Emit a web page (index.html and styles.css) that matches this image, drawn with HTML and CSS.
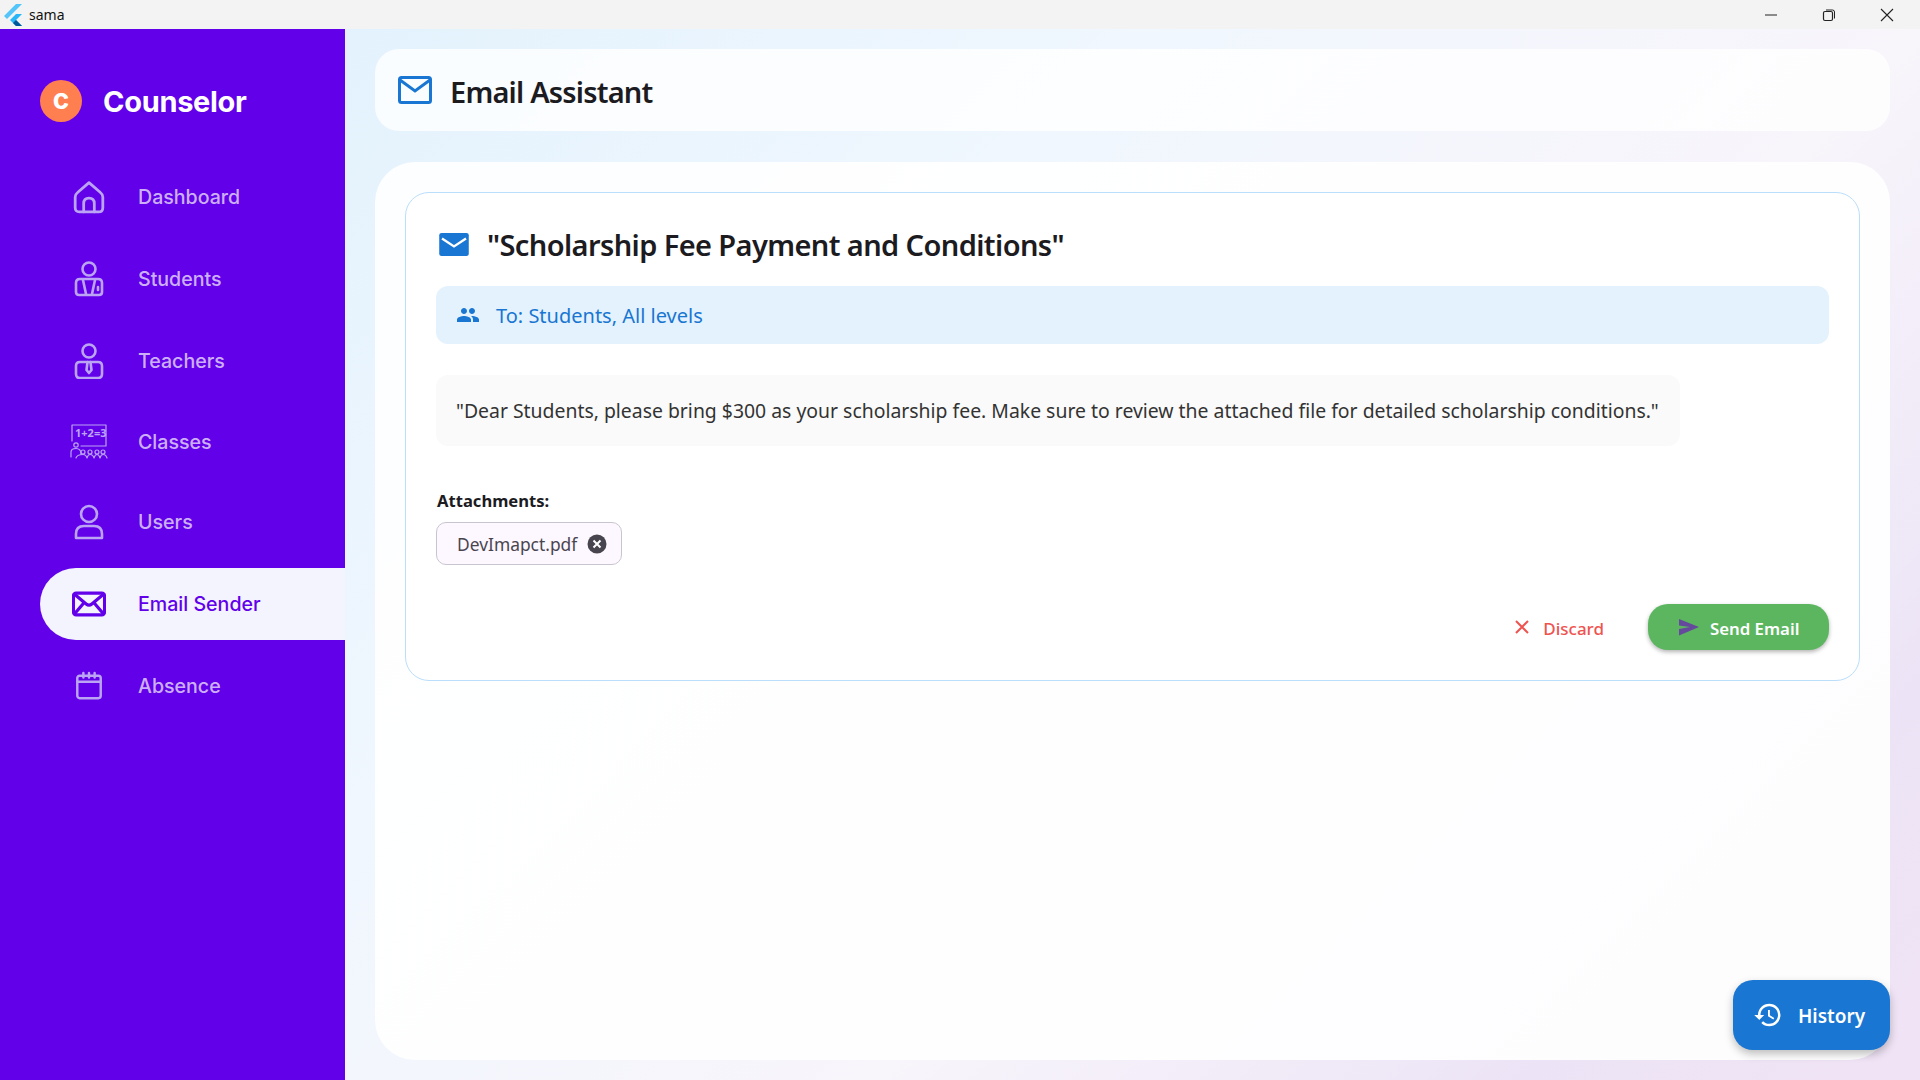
FILE: index.html
```html
<!DOCTYPE html>
<html lang="en">
<head>
    <meta charset="UTF-8">
    <title>sama</title>
    <link rel="stylesheet" href="styles.css">
</head>
<body>
    <div class="titlebar">
        <svg class="app-logo" width="20" height="24" viewBox="0 0 20 24">
            <path d="M13 1h6L7 13l-3 3-3-3z" fill="#54c5f8"/>
            <path d="M13 11h6l-6 6 6 6h-6l-6-6z" fill="#29b6f6"/>
            <path d="M10 20l3-3 6 6h-6z" fill="#01579b"/>
        </svg>
        <span class="app-name">sama</span>
        <div class="win-controls">
            <svg width="14" height="14" viewBox="0 0 14 14"><path d="M1 7h12" stroke="#222" stroke-width="1" fill="none"/></svg>
            <svg width="14" height="14" viewBox="0 0 14 14"><rect x="1.5" y="3.5" width="9" height="9" rx="1.5" stroke="#222" stroke-width="1.2" fill="none"/><path d="M4 2h6.5a2 2 0 0 1 2 2v6.5" stroke="#222" fill="none"/></svg>
            <svg width="14" height="14" viewBox="0 0 14 14"><path d="M1 1l12 12M13 1L1 13" stroke="#222" stroke-width="1.1" fill="none"/></svg>
        </div>
    </div>

    <div class="app">
        <aside class="sidebar">
            <div class="brand">
                <div class="brand-badge">c</div>
                <span class="brand-name">Counselor</span>
            </div>
            <nav class="nav">
                <a class="nav-item">
                    <svg class="nav-icon nav-icon-small" viewBox="0 0 32 32"><path d="M16 2.5 L26.5 11.5 Q29 13.5 29 16 V26 Q29 30 25 30 H7 Q3 30 3 26 V16 Q3 13.5 5.500 11.500 Z"/><path d="M11 30 V22 Q11 17 16 17 Q21 17 21 22 V30"/></svg>
                    <span>Dashboard</span>
                </a>
                <a class="nav-item">
                    <svg class="nav-icon" viewBox="0 0 32 36"><circle cx="16" cy="8" r="6.500"/><path d="M7 18 H25 Q29 18 29 22 V31 Q29 34 26 34 H6 Q3 34 3 31 V22 Q3 18 7 18 Z"/><path d="M10 19 L13 33 M22 19 L19 33"/><path d="M25 26 V29"/></svg>
                    <span>Students</span>
                </a>
                <a class="nav-item">
                    <svg class="nav-icon" viewBox="0 0 32 36"><circle cx="16" cy="8" r="6.500"/><path d="M7 19 H25 Q29 19 29 23 V31 Q29 35 25 35 H7 Q3 35 3 31 V23 Q3 19 7 19 Z"/><path d="M14.500 19 L13.500 27 L16 30 L18.500 27 L17.500 19"/></svg>
                    <span>Teachers</span>
                </a>
                <a class="nav-item nav-item-short">
                    <svg class="nav-icon nav-icon-wide" viewBox="0 0 38 36">
                        <path class="thin" d="M2 17 V1 H36 V22 H11"/>
                        <text x="5" y="13" class="board-text">1+2=3</text>
                        <circle class="thin" cx="6" cy="21" r="2.200"/>
                        <path class="thin" d="M1 33 V28 Q1 24.500 6 24.500 Q11 24.500 11 30"/>
                        <g class="thin">
                            <circle cx="13" cy="28" r="2"/><circle cx="20" cy="28" r="2"/><circle cx="27" cy="28" r="2"/><circle cx="33" cy="28" r="2"/>
                            <path d="M6 34 Q7 30.500 13 30.500 Q16 30.500 17 34 Q18 30.500 20 30.500 Q23 30.500 24 34 Q25 30.500 27 30.500 Q29 30.500 30 34 Q31 30.500 33 30.500 Q36 30.500 37 34"/>
                        </g>
                    </svg>
                    <span>Classes</span>
                </a>
                <a class="nav-item nav-item-short">
                    <svg class="nav-icon" viewBox="0 0 32 36"><circle cx="16" cy="10" r="8"/><path d="M3 34 V30 Q3 22 11 22 H21 Q29 22 29 30 V34 Z"/></svg>
                    <span>Users</span>
                </a>
                <a class="nav-item active">
                    <svg class="nav-icon nav-icon-mail" viewBox="0 0 36 26"><rect x="1.500" y="1.500" width="33" height="23" rx="3"/><path d="M3 3 L15 13 Q18 15.500 21 13 L33 3 M3 23 L12.500 12 M33 23 L23.500 12"/></svg>
                    <span>Email Sender</span>
                </a>
                <a class="nav-item">
                    <svg class="nav-icon nav-icon-cal" viewBox="0 0 32 32"><rect x="3.500" y="5" width="25" height="24" rx="2.500"/><path d="M3.500 11.500 H28.500 M10 2 V7 M16 2 V7 M22 2 V7"/></svg>
                    <span>Absence</span>
                </a>
            </nav>
        </aside>

        <main class="main">
            <header class="page-head">
                <svg width="34" height="28" viewBox="0 0 34 28"><rect x="1.500" y="1.500" width="31" height="25" rx="2" fill="none" stroke="#1976d2" stroke-width="3"/><path d="M2 4 L17 15 L32 4" fill="none" stroke="#1976d2" stroke-width="3"/></svg>
                <h1>Email Assistant</h1>
            </header>

            <section class="panel">
                <div class="email-card">
                    <div class="email-title">
                        <svg class="email-title-icon" width="30" height="24" viewBox="0 0 32 26"><rect width="32" height="25" rx="2.500" fill="#1976d2"/><path d="M3 6 L16 14.500 L29 6" fill="none" stroke="#fff" stroke-width="2.600"/></svg>
                        <h2>"Scholarship Fee Payment and Conditions"</h2>
                    </div>
                    <div class="to-bar">
                        <svg width="24" height="24" viewBox="0 0 24 24"><path fill="#1976d2" d="M16 11c1.660 0 2.990-1.340 2.990-3S17.660 5 16 5s-3 1.340-3 3 1.340 3 3 3zm-8 0c1.660 0 2.990-1.340 2.990-3S9.660 5 8 5 5 6.340 5 8s1.340 3 3 3zm0 2c-2.330 0-7 1.170-7 3.500V19h14v-2.500C15 14.170 10.330 13 8 13zm8 0c-.29 0-.62.020-.97.050 1.160.84 1.970 1.970 1.970 3.450V19h6v-2.500c0-2.330-4.670-3.500-7-3.500z"/></svg>
                        <span>To: Students, All levels</span>
                    </div>
                    <p class="message">"Dear Students, please bring $300 as your scholarship fee. Make sure to review the attached file for detailed scholarship conditions."</p>
                    <div class="attach-label">Attachments:</div>
                    <div class="chip">
                        <span>DevImapct.pdf</span>
                        <svg width="20" height="20" viewBox="0 0 20 20"><circle cx="10" cy="10" r="9.500" fill="#49454f"/><path d="M6.500 6.500l7 7M13.500 6.500l-7 7" stroke="#fff" stroke-width="2"/></svg>
                    </div>
                    <div class="actions">
                        <button class="btn-discard">
                            <svg width="14" height="14" viewBox="0 0 14 14"><path d="M1 1l12 12M13 1L1 13" stroke="#ef5350" stroke-width="2" fill="none"/></svg>
                            <span>Discard</span>
                        </button>
                        <button class="btn-send">
                            <svg width="20" height="17" viewBox="0 0 20 17"><path d="M0 0 L20 8 L0 16.500 V10 L11 8 L0 6.500 Z" fill="#65499c"/></svg>
                            <span>Send Email</span>
                        </button>
                    </div>
                </div>
            </section>

            <button class="btn-history">
                <svg width="30" height="30" viewBox="0 0 24 24"><path fill="#fff" d="M13 3a9 9 0 0 0-9 9H1l3.890 3.890.07.140L9 12H6c0-3.870 3.130-7 7-7s7 3.130 7 7-3.130 7-7 7c-1.930 0-3.680-.79-4.940-2.060l-1.420 1.420A8.954 8.954 0 0 0 13 21a9 9 0 0 0 0-18zm-1 5v5l4.280 2.540.72-1.210-3.500-2.080V8H12z"/></svg>
                <span>History</span>
            </button>
        </main>
    </div>
</body>
</html>
```

FILE: styles.css
```css
* {
    box-sizing: border-box;
}
body {
    margin: 0;
    height: 1080px;
    overflow: hidden;
    display: flex;
    flex-direction: column;
    font-family: "Noto Sans", sans-serif;
    color: #1c1b1f;
}
.titlebar {
    height: 29px;
    flex-shrink: 0;
    display: flex;
    align-items: center;
    background-color: #f3f3f3;
    padding-left: 3px;
}
.app-name {
    margin-left: 6px;
    font-size: 14px;
    color: #111;
}
.win-controls {
    margin-left: auto;
    display: flex;
    gap: 44px;
    padding-right: 26px;
}
.app {
    flex: 1;
    display: flex;
    min-height: 0;
}
.sidebar {
    width: 345px;
    flex-shrink: 0;
    background-color: #6200ea;
    padding: 51px 0 0 40px;
}
.brand {
    display: flex;
    align-items: center;
    gap: 21px;
    height: 42px;
}
.brand-badge {
    width: 42px;
    height: 42px;
    border-radius: 50%;
    background-color: #ff7f50;
    color: #fff;
    font: 700 28px/38px Inter, sans-serif;
    text-align: center;
}
.brand-name {
    font: 700 29px Inter, sans-serif;
    color: #fff;
    letter-spacing: -0.3px;
}
.nav {
    display: flex;
    flex-direction: column;
    gap: 10px;
    margin-top: 39px;
}
.nav-item {
    height: 72px;
    display: flex;
    align-items: center;
    padding-left: 30px;
    border-radius: 36px 0 0 36px;
    color: rgba(255, 255, 255, 0.7);
    font: 500 19.600px Inter, sans-serif;
}
.nav-item-short {
    height: 70px;
}
.nav-icon {
    width: 38px;
    height: 36px;
    margin-right: 30px;
    flex-shrink: 0;
    fill: none;
    stroke: #bba4f4;
    stroke-width: 2.600;
    stroke-linejoin: round;
    stroke-linecap: round;
}
.nav-icon-small {
    height: 34px;
}
.nav-icon-cal {
    height: 30px;
}
.nav-icon .thin {
    stroke-width: 1.200;
    fill: none;
}
.board-text {
    font: 700 11px "Noto Sans", sans-serif;
    fill: #bba4f4;
    stroke: none;
}
.nav-item.active {
    margin-top: 1px;
    background-color: #f3f4fe;
    color: #6200ea;
}
.nav-icon-mail {
    width: 34px;
    height: 26px;
    margin: 0 32px 0 2px;
    stroke: #6200ea;
    stroke-width: 3.400;
}
.main {
    flex: 1;
    position: relative;
    display: flex;
    flex-direction: column;
    gap: 31px;
    padding: 20px 30px;
    background: linear-gradient(135deg, #e3f2fd 0%, #f0f7fe 30%, #f8f5fb 60%, #ece4f6 85%, #f0e3f5 100%);
}
.page-head {
    height: 82px;
    display: flex;
    align-items: center;
    gap: 18px;
    padding-left: 23px;
    border-radius: 24px;
    background-color: rgba(255, 255, 255, 0.8);
}
h1 {
    margin: 2px 0 0;
    font-size: 29px;
    font-weight: 600;
    letter-spacing: -0.8px;
}
.panel {
    flex: 1;
    padding: 30px;
    border-radius: 40px;
    background-color: rgba(255, 255, 255, 0.9);
}
.email-card {
    height: 489px;
    padding: 32px 30px 30px;
    border: 1px solid #bbdefb;
    border-radius: 24px;
    background-color: #fff;
}
.email-title {
    display: flex;
    align-items: center;
    gap: 18px;
    height: 44px;
    padding-left: 3px;
}
.email-title-icon {
    margin-top: -4px;
}
h2 {
    margin: -5px 0 0;
    font-size: 29px;
    font-weight: 600;
    letter-spacing: -0.6px;
}
.to-bar {
    height: 58px;
    margin-top: 17px;
    display: flex;
    align-items: center;
    gap: 16px;
    padding-left: 20px;
    border-radius: 12px;
    background-color: #e3f2fd;
    color: #1976d2;
    font-size: 20px;
}
.message {
    width: 1244px;
    height: 71px;
    margin: 31px 0 0;
    padding: 0 20px;
    display: flex;
    align-items: center;
    border-radius: 12px;
    background-color: #fafafa;
    font-size: 19.400px;
    color: #333;
    white-space: nowrap;
}
.attach-label {
    margin-top: 43px;
    padding-left: 1px;
    font-size: 16.600px;
    font-weight: 700;
    line-height: 24px;
}
.chip {
    width: 186px;
    height: 43px;
    margin-top: 9px;
    display: flex;
    align-items: center;
    justify-content: space-between;
    padding: 0 14px 0 20px;
    border: 1.500px solid #cac4d0;
    border-radius: 10px;
    background-color: #fdf8ff;
    color: #49454f;
    font-size: 17.400px;
}
.actions {
    display: flex;
    justify-content: flex-end;
    align-items: center;
    gap: 44px;
    margin-top: 39px;
}
button {
    border: none;
    display: flex;
    align-items: center;
    font-family: "Noto Sans", sans-serif;
    cursor: pointer;
}
button span {
    padding-top: 2px;
}
.btn-discard {
    gap: 14px;
    background: none;
    color: #ef5350;
    font-size: 17px;
    font-weight: 500;
    padding: 0;
}
.btn-send {
    width: 181px;
    height: 46px;
    gap: 11px;
    padding-left: 31px;
    border-radius: 20px;
    background-color: #5cb660;
    color: #fff;
    font-size: 16.800px;
    font-weight: 600;
    box-shadow: 0 2px 4px rgba(0, 0, 0, 0.3);
}
.btn-history {
    position: absolute;
    right: 30px;
    bottom: 30px;
    width: 157px;
    height: 70px;
    gap: 15px;
    padding-left: 20px;
    border-radius: 20px;
    background-color: #1976d2;
    color: #fff;
    font-size: 19px;
    font-weight: 600;
    box-shadow: 0 4px 8px rgba(0, 0, 0, 0.25);
}
```
